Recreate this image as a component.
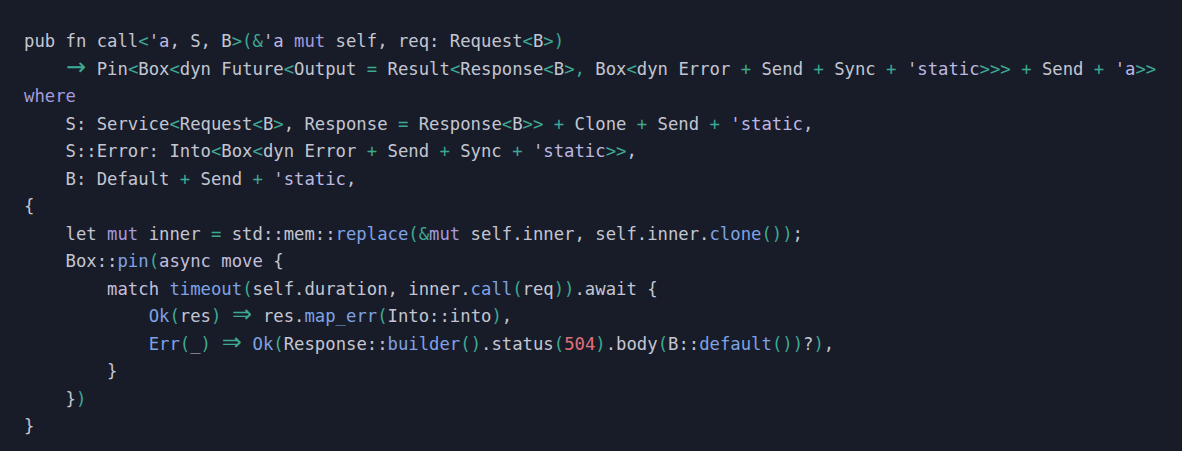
type Tok = [string, keyof typeof tone];

const tone = {
    t: 'text-[#c3c6d2]',
    p: 'text-[#3ea993]',
    k: 'text-[#a49bdc]',
    l: 'text-[#bdb8e2]',
    m: 'text-[#c2bfdc]',
    f: 'text-[#7fa2e4]',
    n: 'text-[#e0707c]',
    a: 'text-[#3ea993] inline-block w-[20.8px] text-center text-[24px] leading-[20px] font-["DejaVu_Sans",sans-serif]',
};

const lines: Tok[][] = [
    [['pub fn call', 't'], ['<', 'p'], ["'a", 'l'], [', S, B', 't'], ['>(&', 'p'], ["'a", 'l'], [' ', 't'], ['mut', 'k'], [' self, req: Request', 't'], ['<', 'p'], ['B', 't'], ['>)', 'p']],
    [['    ', 't'], ['→', 'a'], [' Pin', 't'], ['<', 'p'], ['Box', 't'], ['<', 'p'], ['dyn Future', 't'], ['<', 'p'], ['Output ', 't'], ['=', 'p'], [' Result', 't'], ['<', 'p'], ['Response', 't'], ['<', 'p'], ['B', 't'], ['>, ', 'p'], ['Box', 't'], ['<', 'p'], ['dyn Error ', 't'], ['+', 'p'], [' Send ', 't'], ['+', 'p'], [' Sync ', 't'], ['+', 'p'], [' ', 't'], ["'static", 'l'], ['>>>', 'p'], [' ', 't'], ['+', 'p'], [' Send ', 't'], ['+', 'p'], [' ', 't'], ["'a", 'l'], ['>>', 'p']],
    [['where', 'k']],
    [['    S: Service', 't'], ['<', 'p'], ['Request', 't'], ['<', 'p'], ['B', 't'], ['>', 'p'], [', Response ', 't'], ['=', 'p'], [' Response', 't'], ['<', 'p'], ['B', 't'], ['>>', 'p'], [' ', 't'], ['+', 'p'], [' Clone ', 't'], ['+', 'p'], [' Send ', 't'], ['+', 'p'], [' ', 't'], ["'static", 'l'], [',', 't']],
    [['    S::Error: Into', 't'], ['<', 'p'], ['Box', 't'], ['<', 'p'], ['dyn Error ', 't'], ['+', 'p'], [' Send ', 't'], ['+', 'p'], [' Sync ', 't'], ['+', 'p'], [' ', 't'], ["'static", 'l'], ['>>', 'p'], [',', 't']],
    [['    B: Default ', 't'], ['+', 'p'], [' Send ', 't'], ['+', 'p'], [' ', 't'], ["'static", 'l'], [',', 't']],
    [['{', 't']],
    [['    let ', 't'], ['mut', 'k'], [' inner ', 't'], ['=', 'p'], [' std::mem::', 't'], ['replace', 'f'], ['(&', 'p'], ['mut', 'k'], [' self.inner, self.inner.', 't'], ['clone', 'f'], ['())', 'p'], [';', 't']],
    [['    Box::', 't'], ['pin', 'f'], ['(', 'p'], ['async move', 'm'], [' {', 't']],
    [['        ', 't'], ['match', 'm'], [' ', 't'], ['timeout', 'f'], ['(', 'p'], ['self.duration, inner.', 't'], ['call', 'f'], ['(', 'p'], ['req', 't'], ['))', 'p'], ['.await {', 't']],
    [['            ', 't'], ['Ok', 'f'], ['(', 'p'], ['res', 't'], [')', 'p'], [' ', 't'], ['⇒', 'a'], [' res.', 't'], ['map_err', 'f'], ['(', 'p'], ['Into::into', 't'], [')', 'p'], [',', 't']],
    [['            ', 't'], ['Err', 'f'], ['(', 'p'], ['_', 't'], [')', 'p'], [' ', 't'], ['⇒', 'a'], [' ', 't'], ['Ok', 'f'], ['(', 'p'], ['Response::', 't'], ['builder', 'f'], ['()', 'p'], ['.status', 't'], ['(', 'p'], ['504', 'n'], [')', 'p'], ['.body', 't'], ['(', 'p'], ['B::', 't'], ['default', 'f'], ['())', 'p'], ['?', 't'], [')', 'p'], [',', 't']],
    [['        }', 't']],
    [['    }', 't'], [')', 'p']],
    [['}', 't']],
];

export default function App() {
    return (
        <div className="w-full h-[451px] bg-[#181c28] overflow-hidden">
            <pre className="pt-[28px] pl-[24px] font-['DejaVu_Sans_Mono',monospace] text-[17.25px] leading-[27.5px]">
                {lines.map((line, i) => (
                    <div key={i} className="whitespace-pre h-[27.5px]">
                        {line.map(([text, kind], j) => (
                            <span key={j} className={tone[kind]}>
                                {text}
                            </span>
                        ))}
                    </div>
                ))}
            </pre>
        </div>
    );
}
